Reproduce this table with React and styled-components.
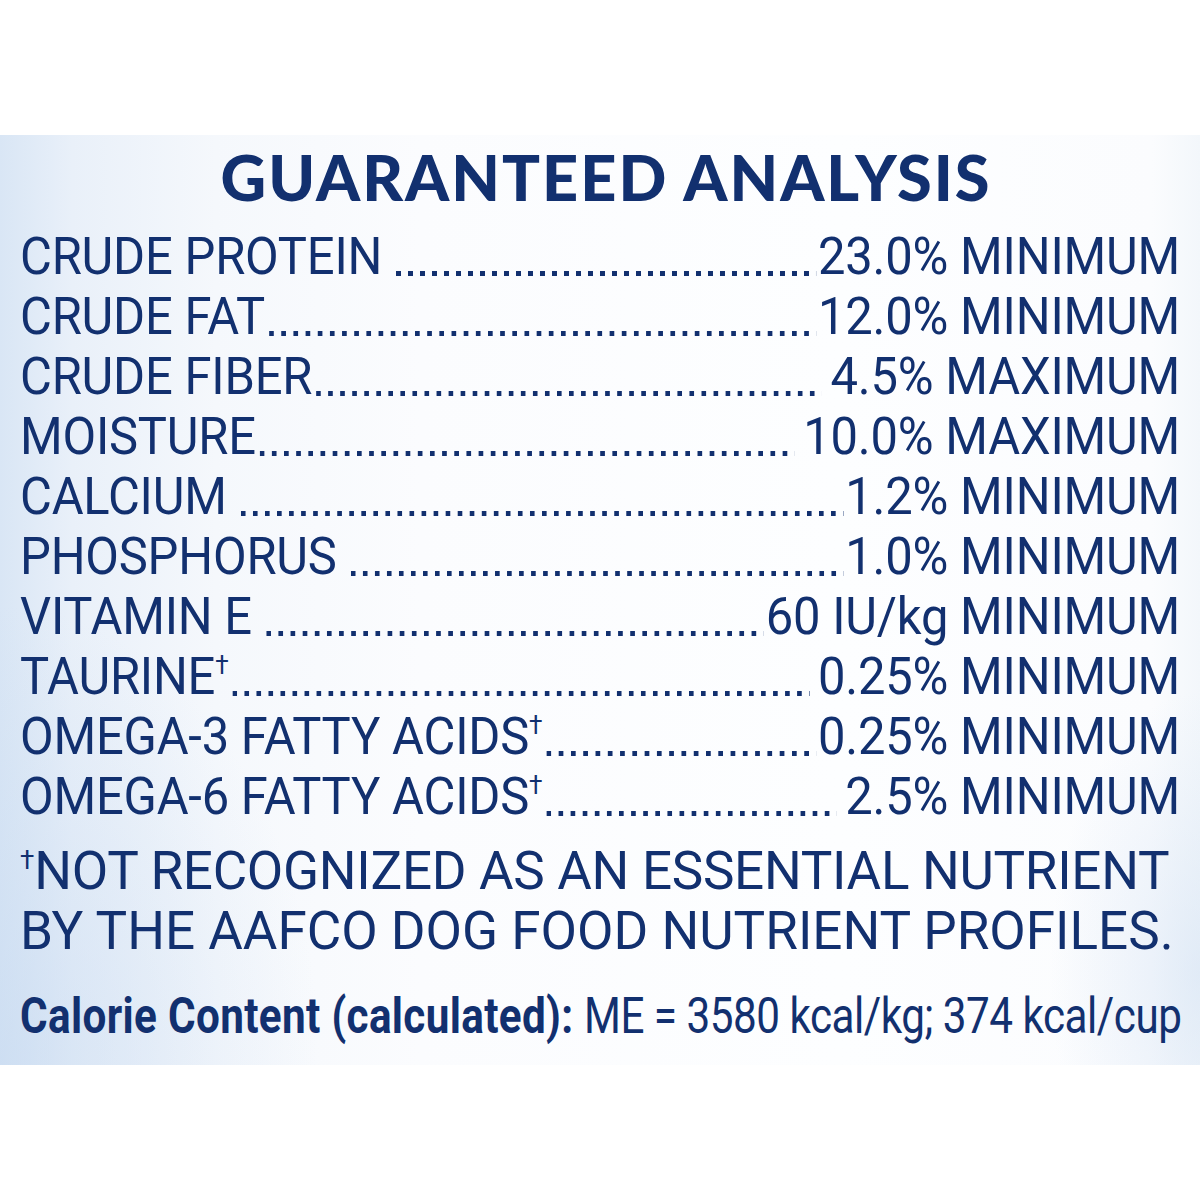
import styled, { createGlobalStyle, css } from 'styled-components'

const navy = '#12306f'
const squeeze = 0.94

const GlobalStyle = createGlobalStyle`
  html, body {
    margin: 0;
    padding: 0;
    background: #ffffff;
  }
`

// Roboto is a little too wide for the condensed face of the label
const condensed = (k) => css`
  width: calc(100% / ${k});
  transform: scaleX(${k});
  transform-origin: left top;
`

const Page = styled.div`
  width: 1200px;
  height: 1200px;
  padding-top: 135px;
  box-sizing: border-box;
  background: #ffffff;
  overflow: hidden;
`

const Panel = styled.section`
  height: 930px;
  box-sizing: border-box;
  padding: 2px 20px 0 20px;
  color: ${navy};
  font-family: Roboto, "Liberation Sans", Arial, sans-serif;
  background:
    radial-gradient(ellipse 320px 460px at 0% 100%, rgba(196, 216, 240, 0.55), rgba(196, 216, 240, 0) 100%),
    radial-gradient(ellipse 150px 280px at 100% 90%, rgba(210, 225, 243, 0.55), rgba(210, 225, 243, 0) 100%),
    linear-gradient(90deg, #d9e6f5 0%, #e9f0f9 6%, #f5f8fc 18%, #fbfcfe 35%, #fdfeff 70%, #fbfcfe 96%, #f3f7fb 100%);
`

const Title = styled.h1`
  margin: 0 0 10px;
  padding-left: 12px;
  font-family: "Lato", "Open Sans", sans-serif;
  font-weight: 900;
  font-size: 63px;
  line-height: 80px;
  letter-spacing: 2px;
  text-align: center;
`

const List = styled.div`
  display: flex;
  flex-direction: column;
  ${condensed(squeeze)}
`

const Row = styled.div`
  display: flex;
  align-items: stretch;
  font-size: 52px;
  line-height: 60px;
  letter-spacing: -0.2px;
  white-space: nowrap;
`

const Label = styled.span``

const Leader = styled.span`
  flex: 1;
  margin-left: ${({ $spaceL }) => ($spaceL ? '15px' : '4px')};
  margin-right: ${({ $spaceR }) => ($spaceR ? '9px' : '2px')};
  background-image: linear-gradient(90deg, ${navy} 0 4.9px, transparent 4.9px 100%);
  background-size: 12.66px 4.6px;
  background-repeat: space no-repeat;
  background-position: left 0 top 44px;
`

const Value = styled.span``

const Dagger = styled.sup`
  font-size: 26px;
  line-height: 0;
  letter-spacing: 0;
  vertical-align: 20px;
`

const Note = styled.div`
  margin-top: 14px;
  font-size: 53px;
  line-height: 60px;
  white-space: nowrap;
`

const NoteLine = styled.div`
  letter-spacing: ${({ $tight }) => ($tight ? '-0.3px' : '0px')};
`

const Calorie = styled.div`
  margin-top: 25px;
  font-size: 50px;
  line-height: 60px;
  white-space: nowrap;
  transform: scaleX(0.845);
  transform-origin: left center;
`

const Strong = styled.strong`
  font-weight: 700;
  letter-spacing: 0.4px;
`

const Plain = styled.span`
  letter-spacing: -0.6px;
`

const rows = [
  { label: 'CRUDE PROTEIN', value: '23.0% MINIMUM', l: true },
  { label: 'CRUDE FAT', value: '12.0% MINIMUM' },
  { label: 'CRUDE FIBER', value: '4.5% MAXIMUM', r: true },
  { label: 'MOISTURE', value: '10.0% MAXIMUM', r: true },
  { label: 'CALCIUM', value: '1.2% MINIMUM', l: true },
  { label: 'PHOSPHORUS', value: '1.0% MINIMUM', l: true },
  { label: 'VITAMIN E', value: '60 IU/kg MINIMUM', l: true },
  { label: 'TAURINE', value: '0.25% MINIMUM', dagger: true, r: true },
  { label: 'OMEGA-3 FATTY ACIDS', value: '0.25% MINIMUM', dagger: true },
  { label: 'OMEGA-6 FATTY ACIDS', value: '2.5% MINIMUM', dagger: true, r: true },
]

export default function App() {
  return (
    <Page>
      <GlobalStyle />
      <Panel>
        <Title>GUARANTEED ANALYSIS</Title>
        <List>
          {rows.map((row) => (
            <Row key={row.label}>
              <Label>
                {row.label}
                {row.dagger && <Dagger>†</Dagger>}
              </Label>
              <Leader $spaceL={row.l} $spaceR={row.r} />
              <Value>{row.value}</Value>
            </Row>
          ))}
        </List>
        <Note>
          <NoteLine $tight>
            <Dagger>†</Dagger>NOT RECOGNIZED AS AN ESSENTIAL NUTRIENT
          </NoteLine>
          <NoteLine>BY THE AAFCO DOG FOOD NUTRIENT PROFILES.</NoteLine>
        </Note>
        <Calorie>
          <Strong>Calorie Content (calculated):</Strong>{' '}
          <Plain>ME = 3580 kcal/kg; 374 kcal/cup</Plain>
        </Calorie>
      </Panel>
    </Page>
  )
}
